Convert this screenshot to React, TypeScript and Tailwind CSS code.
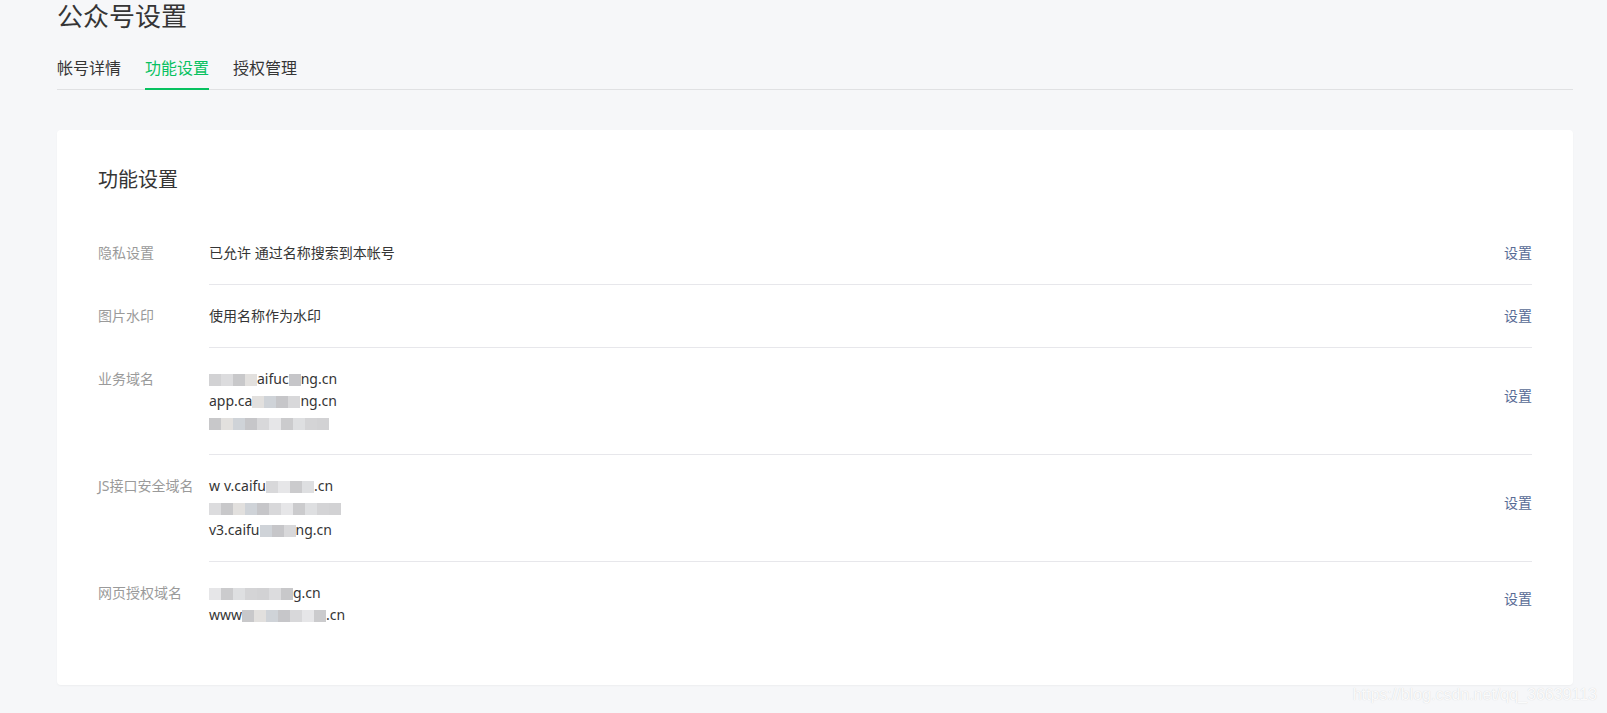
import React from "react";

const shades = ["#d2d2d4", "#dcdcde", "#c8c8ca", "#e2e0de", "#cfd3d8", "#c6c6c9", "#d8d8da", "#e6e6e8", "#cbcbcd", "#dedfe1", "#d4d4d6"];

function Mosaic({ n, offset = 0 }: { n: number; offset?: number }) {
  return (
    <span className="inline-flex align-middle">
      {Array.from({ length: n }).map((_, i) => (
        <span
          key={i}
          className="inline-block h-[12px] w-[12px]"
          style={{ backgroundColor: shades[(i + offset) % shades.length] }}
        />
      ))}
    </span>
  );
}

type Row = {
  label: string;
  lines: React.ReactNode[];
  multi?: boolean;
};

const rows: Row[] = [
  { label: "隐私设置", lines: ["已允许 通过名称搜索到本帐号"] },
  { label: "图片水印", lines: ["使用名称作为水印"] },
  {
    label: "业务域名",
    multi: true,
    lines: [
      <>
        <Mosaic n={4} />
        aifuc
        <Mosaic n={1} offset={5} />
        ng.cn
      </>,
      <>
        app.ca
        <Mosaic n={4} offset={3} />
        ng.cn
      </>,
      <>
        <Mosaic n={10} offset={2} />
      </>,
    ],
  },
  {
    label: "JS接口安全域名",
    multi: true,
    lines: [
      <>
        w<span className="inline-block w-[4px]" />
        v.caifu
        <Mosaic n={4} offset={6} />
        .cn
      </>,
      <>
        <Mosaic n={11} offset={1} />
      </>,
      <>
        v3.caifu
        <Mosaic n={3} offset={4} />
        ng.cn
      </>,
    ],
  },
  {
    label: "网页授权域名",
    multi: true,
    lines: [
      <>
        <Mosaic n={7} offset={7} />
        g.cn
      </>,
      <>
        www
        <Mosaic n={7} offset={2} />
        .cn
      </>,
    ],
  },
];

export default function App() {
  return (
    <div className="relative min-h-[713px] bg-[#f6f7f9] font-['Noto_Sans','Noto_Sans_CJK_SC',sans-serif]">
      <div className="ml-[57px] w-[1516px]">
        {/* Header */}
        <h1 className="text-[26px] leading-[32px] text-[#353535]">公众号设置</h1>

        {/* Tabs */}
        <nav className="mt-[24px] flex gap-[24px] border-b border-[#e0e1e3] text-[16px] leading-[24px]">
          <span className="-mb-px border-b-2 border-transparent pb-[8px] text-[#353535]">帐号详情</span>
          <span className="-mb-px border-b-2 border-[#07c160] pb-[8px] text-[#07c160]">功能设置</span>
          <span className="-mb-px border-b-2 border-transparent pb-[8px] text-[#353535]">授权管理</span>
        </nav>

        {/* Card */}
        <div className="mt-[40px] rounded-[4px] bg-white px-[41px] pb-[39px] pt-[40px] shadow-[0_1px_2px_rgba(0,0,0,0.04)]">
          <h2 className="text-[20px] leading-[20px] text-[#353535]">功能设置</h2>

          <div className="mt-[32px]">
            {rows.map((r, idx) => (
              <div key={idx} className="flex text-[14px] leading-[22px]">
                <div className="w-[111px] shrink-0 py-[20px] text-[#9a9a9a]">{r.label}</div>
                <div
                  className={
                    "flex flex-1 items-center justify-between py-[20px] " +
                    (idx < rows.length - 1 ? "border-b border-[#e7e7eb]" : "")
                  }
                >
                  <div className="text-[#353535]">
                    {r.lines.map((l, i) => (
                      <div key={i} className="h-[22px] whitespace-nowrap">
                        {l}
                      </div>
                    ))}
                  </div>
                  <span className={r.multi ? "mb-[10px] text-[#576b95]" : "text-[#576b95]"}>设置</span>
                </div>
              </div>
            ))}
          </div>
        </div>
      </div>

      {/* watermark */}
      <div className="absolute bottom-[9px] right-[10px] font-['Liberation_Sans',Arial,sans-serif] text-[16px] leading-[18px] text-white/90 [text-shadow:0_0_1px_rgba(0,0,0,0.18)]">
        https://blog.csdn.net/qq_36639113
      </div>
    </div>
  );
}
